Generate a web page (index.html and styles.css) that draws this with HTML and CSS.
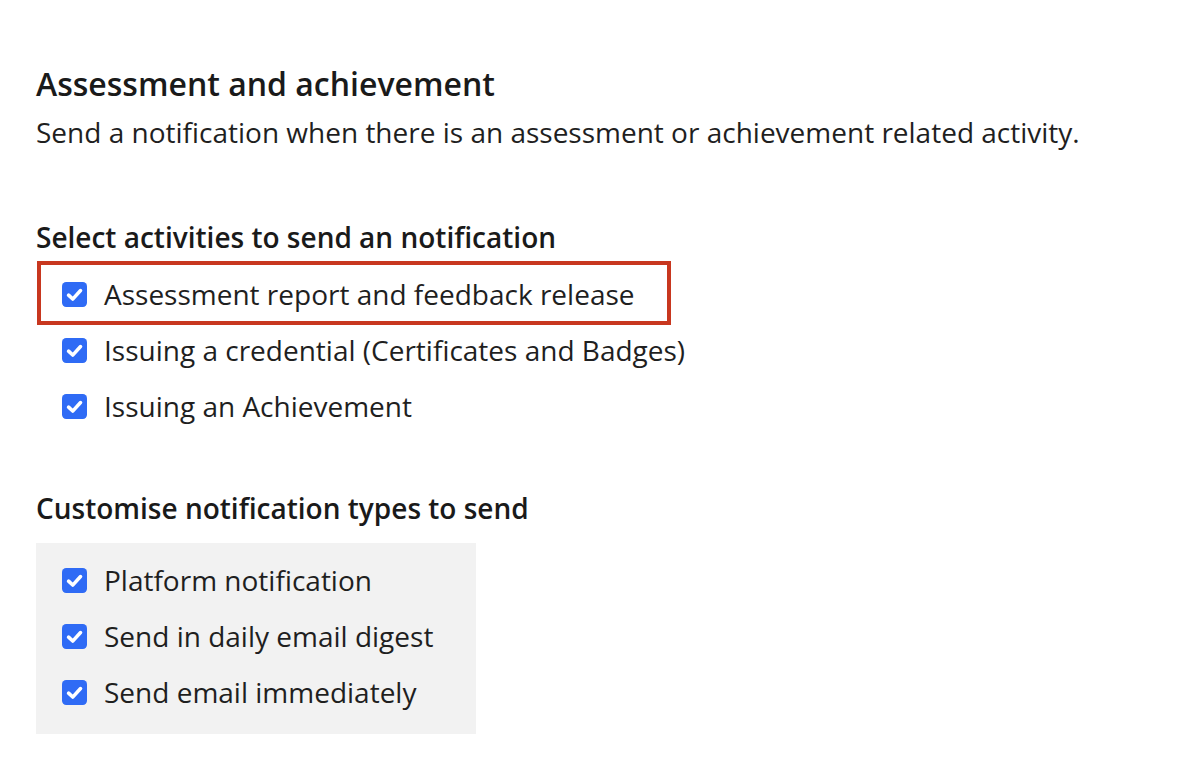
FILE: index.html
```html
<!DOCTYPE html>
<html lang="en">
<head>
<meta charset="utf-8">
<title>Assessment and achievement</title>
<link rel="stylesheet" href="styles.css">
</head>
<body>
<main class="page">
  <h1 class="title">Assessment and achievement</h1>
  <p class="subtitle">Send a notification when there is an assessment or achievement related activity.</p>

  <h2 class="section-title section-first">Select activities to send an notification</h2>
  <ul class="options">
    <li class="option highlight">
      <span class="check"><svg viewBox="0 0 24 24" width="25" height="25"><rect x="0" y="0" width="24" height="24" rx="4" fill="#2f6bf5"/><path d="M6.3 12.6 L10.3 16.4 L17.8 8.2" fill="none" stroke="#fff" stroke-width="3.4" stroke-linecap="round" stroke-linejoin="round"/></svg></span>
      <span class="label">Assessment report and feedback release</span>
    </li>
    <li class="option">
      <span class="check"><svg viewBox="0 0 24 24" width="25" height="25"><rect x="0" y="0" width="24" height="24" rx="4" fill="#2f6bf5"/><path d="M6.3 12.6 L10.3 16.4 L17.8 8.2" fill="none" stroke="#fff" stroke-width="3.4" stroke-linecap="round" stroke-linejoin="round"/></svg></span>
      <span class="label">Issuing a credential (Certificates and Badges)</span>
    </li>
    <li class="option">
      <span class="check"><svg viewBox="0 0 24 24" width="25" height="25"><rect x="0" y="0" width="24" height="24" rx="4" fill="#2f6bf5"/><path d="M6.3 12.6 L10.3 16.4 L17.8 8.2" fill="none" stroke="#fff" stroke-width="3.4" stroke-linecap="round" stroke-linejoin="round"/></svg></span>
      <span class="label">Issuing an Achievement</span>
    </li>
  </ul>

  <h2 class="section-title section-second">Customise notification types to send</h2>
  <ul class="options types">
    <li class="option">
      <span class="check"><svg viewBox="0 0 24 24" width="25" height="25"><rect x="0" y="0" width="24" height="24" rx="4" fill="#2f6bf5"/><path d="M6.3 12.6 L10.3 16.4 L17.8 8.2" fill="none" stroke="#fff" stroke-width="3.4" stroke-linecap="round" stroke-linejoin="round"/></svg></span>
      <span class="label">Platform notification</span>
    </li>
    <li class="option">
      <span class="check"><svg viewBox="0 0 24 24" width="25" height="25"><rect x="0" y="0" width="24" height="24" rx="4" fill="#2f6bf5"/><path d="M6.3 12.6 L10.3 16.4 L17.8 8.2" fill="none" stroke="#fff" stroke-width="3.4" stroke-linecap="round" stroke-linejoin="round"/></svg></span>
      <span class="label">Send in daily email digest</span>
    </li>
    <li class="option">
      <span class="check"><svg viewBox="0 0 24 24" width="25" height="25"><rect x="0" y="0" width="24" height="24" rx="4" fill="#2f6bf5"/><path d="M6.3 12.6 L10.3 16.4 L17.8 8.2" fill="none" stroke="#fff" stroke-width="3.4" stroke-linecap="round" stroke-linejoin="round"/></svg></span>
      <span class="label">Send email immediately</span>
    </li>
  </ul>
</main>
</body>
</html>
```

FILE: styles.css
```css
html, body {
  margin: 0;
  padding: 0;
  background: #ffffff;
}

body {
  font-family: "Open Sans", "Noto Sans", sans-serif;
  color: #1f1f1f;
}

.page {
  padding: 64px 36px 0 36px;
}

.title {
  margin: 0;
  font-size: 32px;
  line-height: 40px;
  font-weight: 600;
  color: #1a1a1a;
}

.subtitle {
  margin: 8px 0 0 0;
  font-size: 28px;
  line-height: 40px;
  font-weight: 400;
}

.section-title {
  margin: 0;
  font-size: 28px;
  line-height: 40px;
  font-weight: 600;
  color: #1a1a1a;
}

.section-first {
  margin-top: 65px;
}

.section-second {
  margin-top: 54px;
}

.options {
  list-style: none;
  margin: 9px 0 0 0;
  padding: 0;
}

.option {
  position: relative;
  display: flex;
  align-items: center;
  gap: 17px;
  height: 56px;
  padding-left: 26px;
}

.check {
  display: flex;
  width: 25px;
  height: 25px;
}

.label {
  font-size: 28px;
  line-height: 40px;
}

.highlight::before {
  content: "";
  position: absolute;
  left: 1px;
  top: -5px;
  width: 634px;
  height: 64px;
  box-sizing: border-box;
  border: 4px solid #c8371f;
}

.types {
  margin-top: 15px;
  width: 440px;
  background: #f2f2f2;
  padding: 9px 0 14px 0;
}
```
